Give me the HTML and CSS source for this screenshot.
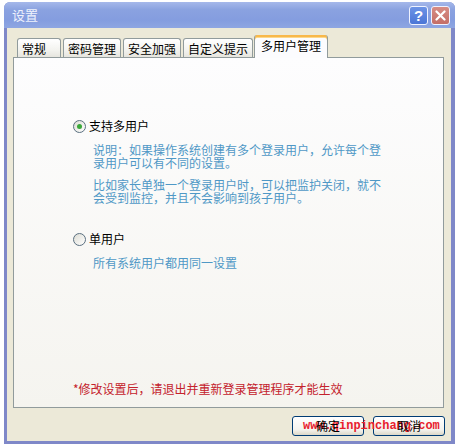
FILE: index.html
```html
<!DOCTYPE html>
<html lang="zh-CN">
<head>
    <meta charset="UTF-8">
    <title>设置</title>
<link rel="stylesheet" href="styles.css">
</head>
<body>
    <div class="window">
        <div class="titlebar">
            <span class="title">设置</span>
            <div class="ctrls">
                <span class="cbtn help">?</span>
                <span class="cbtn close">
                    <svg width="11" height="11" viewBox="0 0 11 11"><path d="M1.5 1.5L9.5 9.5M9.5 1.5L1.5 9.5" stroke="#fff" stroke-width="2.2" stroke-linecap="round"/></svg>
                </span>
            </div>
        </div>

        <div class="client">
            <ul class="tabs">
                <li class="first">常规</li>
                <li>密码管理</li>
                <li>安全加强</li>
                <li>自定义提示</li>
                <li class="ac">多用户管理</li>
            </ul>

            <div class="panel">
                <div class="opt"><span class="radio on"></span>支持多用户</div>
                <p class="desc">说明：如果操作系统创建有多个登录用户，允许每个登录用户可以有不同的设置。</p>
                <p class="desc">比如家长单独一个登录用户时，可以把监护关闭，就不会受到监控，并且不会影响到孩子用户。</p>

                <div class="opt opt2"><span class="radio"></span>单用户</div>
                <p class="desc">所有系统用户都用同一设置</p>

                <p class="note">*修改设置后，请退出并重新登录管理程序才能生效</p>
            </div>

            <div class="btns">
                <a href="javascript:;" class="btn"><span>确定</span></a>
                <a href="javascript:;" class="btn"><span>取消</span></a>
                <span class="mark">www.qinpinchang.com</span>
            </div>
        </div>
    </div>
</body>
</html>
```

FILE: styles.css
```css
*{margin:0;padding:0;}
ol,ul{list-style:none;}
a{text-decoration:none;color:#000;}
body{background:#fff;font:12px/14px "Noto Sans CJK SC","Liberation Sans",sans-serif;color:#000;}

.window{width:451px;margin:2px 0 0 4px;background:#7f88c8;border-radius:6px 6px 0 0;padding-bottom:3px;}
.titlebar{height:26px;display:flex;align-items:center;justify-content:space-between;padding:0 5px 0 8px;border-radius:6px 6px 0 0;background:linear-gradient(#a5b8ea,#8aa2e0 30%,#849ddf 70%,#8ea6e2);}
.title{color:#eef2fc;font-size:13px;}
.ctrls{display:flex;gap:3px;margin-top:1px;}
.cbtn{width:19px;height:19px;box-sizing:border-box;border:1px solid #eef2ff;border-radius:3px;display:flex;align-items:center;justify-content:center;color:#fff;font:bold 15px/1 "Liberation Sans",sans-serif;}
.help{background:linear-gradient(#6c93e6,#4b76d6);}
.close{background:linear-gradient(#d78c84,#c46e66);}

.client{background:#ece9d8;margin:0 4px 0 3px;padding:7px 6px 5px 6px;}

.tabs{display:flex;align-items:flex-end;padding-left:4px;position:relative;z-index:2;}
.tabs li{height:19px;line-height:19px;box-sizing:border-box;padding:0 4px;margin-left:2px;border:1px solid #919b9c;border-bottom:none;border-radius:3px 3px 0 0;background:linear-gradient(#fff,#f3f3ef 60%,#e6e5de);white-space:nowrap;}
.tabs li.first{margin-left:0;padding-right:14px;}
.tabs li.ac{height:23px;line-height:21px;margin-left:1px;margin-bottom:-1px;padding:0 6px;background:#fcfcfe;border-top:none;box-shadow:inset 0 2px 0 #f8b84a,inset 0 3px 0 #fcd88c;}

.panel{box-sizing:border-box;height:351px;margin-right:1px;border:1px solid #919b9c;background:linear-gradient(#fdfdfe,#f5f4ef);padding:61px 0 0 59px;display:flex;flex-direction:column;}
.opt{display:flex;align-items:center;height:14px;}
.opt2{margin-top:28px;}
.radio{width:13px;height:13px;box-sizing:border-box;border:1px solid #5a6f80;border-radius:50%;background:linear-gradient(135deg,#dcdcd4,#fff);margin-right:3px;position:relative;}
.radio.on:after{content:"";position:absolute;left:3px;top:3px;width:5px;height:5px;border-radius:50%;background:#3aa83a;}
.desc{width:290px;margin:10px 0 0 20px;line-height:13px;color:#4f98c6;}
.desc+.desc{margin-top:9px;}
.note{margin-top:auto;margin-bottom:11px;color:#c4222c;}

.btns{display:flex;justify-content:flex-end;gap:9px;margin-top:8px;position:relative;z-index:0;}
.btn{width:72px;height:20px;box-sizing:border-box;border:1px solid #003c74;border-radius:3px;background:linear-gradient(#fff,#f4f3ee 70%,#dcd8c8);text-align:center;line-height:18px;}
.btn span{position:relative;z-index:2;}
.mark{position:absolute;z-index:1;left:290px;top:3px;color:#e8202c;font:bold 12px/14px "Liberation Mono",monospace;pointer-events:none;}
```
